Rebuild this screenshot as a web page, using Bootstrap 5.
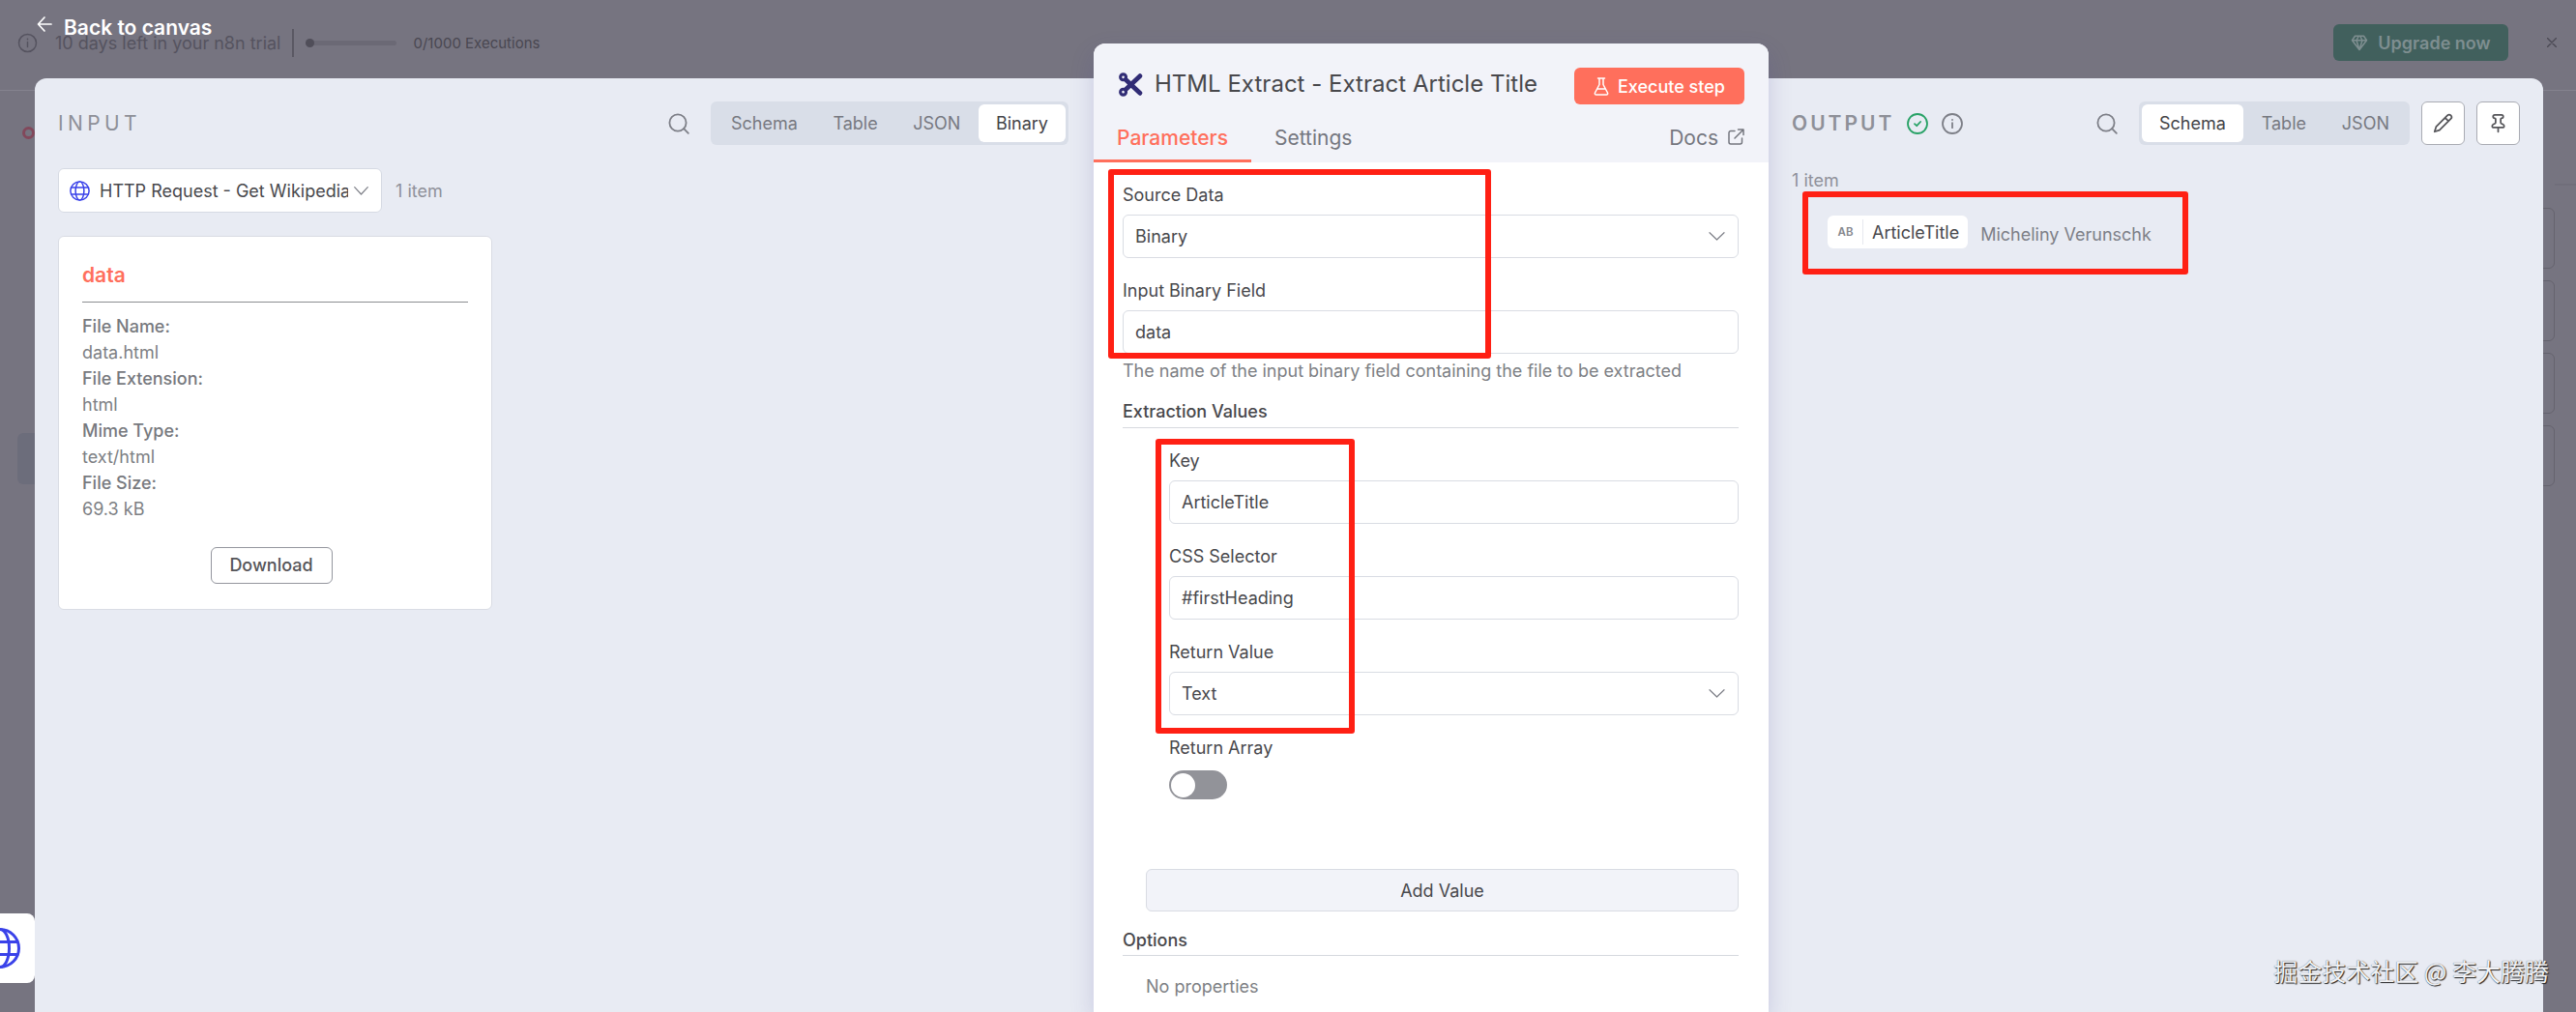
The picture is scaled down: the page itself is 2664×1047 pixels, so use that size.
<!DOCTYPE html>
<html lang="en">
<head>
<meta charset="utf-8">
<meta name="viewport" content="width=device-width, initial-scale=1">
<title>HTML Extract - Extract Article Title</title>
<link rel="stylesheet" href="https://cdn.jsdelivr.net/npm/bootstrap@5.3.0/dist/css/bootstrap.min.css">
<style>
  body { font-family: Inter, "Noto Sans", sans-serif; font-size: 18px; line-height: 27px; color: #48484c; background: #767480; height: 1047px; overflow: hidden; }
  svg { display: block; flex: none; fill: none; stroke: currentColor; stroke-linecap: round; stroke-linejoin: round; }

  /* dimmed application behind the dialog */
  .trial-bar { height: 94px; padding: 15px 20px 0 18px; color: #55535f; border-bottom: 1px solid #84828e; }
  .trial-row { height: 58px; }
  .trial-text { margin-left: 18px; }
  .trial-sep { width: 2px; height: 29px; background: #5a5863; margin: 0 12px; }
  .meter { width: 94px; height: 5px; border-radius: 3px; background: #6b6975; margin-right: 17px; }
  .meter i { display: block; width: 9px; height: 9px; border-radius: 50%; background: #504e59; transform: translateY(-2px); }
  .meter-text { font-size: 15px; color: #494751; }
  .btn-upgrade { width: 181px; height: 38px; background: #41605d; color: #7e8e90; font-size: 18px; font-weight: 600; border-radius: 6px; gap: 10px; margin-right: 40px; }
  .x-ink { color: #4c4a55; }
  .back-link { left: 38px; top: 14px; height: 28px; color: #fff; font-size: 21px; font-weight: 600; gap: 12px; }
  .back-link svg { margin-top: -6px; }
  .side-rule { right: 0; top: 190px; width: 22px; height: 2px; background: #706e7a; }
  .ghost-stack { right: 22px; top: 215px; width: 60px; gap: 12px; }
  .ghost-box { height: 63px; border: 1px solid #65636e; border-radius: 6px; }
  .ghost-node { left: 18px; top: 448px; width: 60px; height: 53px; border-radius: 6px; background: #6c6d7b; }
  .ghost-dot { left: 23px; top: 131px; width: 13px; height: 13px; border: 3px solid #82485b; border-radius: 50%; }
  .node-tab { left: 0; top: 945px; width: 36px; height: 72px; background: #fff; border-radius: 0 8px 8px 0; overflow: hidden; }
  .node-tab svg { margin-left: -21px; }

  /* dialog */
  .ndv { left: 36px; right: 34px; top: 81px; bottom: 0; background: #e8ebf3; border-radius: 12px 12px 0 0; overflow: hidden; }
  .pane-in { width: 1095px; padding: 24px 26px 0 24px; }
  .pane-mid { width: 698px; }
  .pane-out { padding: 24px 24px 0 24px; }
  .pane-title { font-size: 21px; letter-spacing: 4.4px; color: #8e9098; font-weight: 400; }
  .bold-title { font-weight: 600; letter-spacing: 3px; }
  .muted-ink { color: #7d7f87; }
  .pale-ink { color: #8f919a; }
  .globe-ink { color: #3a42e9; }
  .ok-ink { color: #28a266; margin-left: 13px; }
  .info-gap { margin-left: 14px; }
  .tabset { width: 370px; height: 45px; background: #d9dee8; border-radius: 6px; padding: 3px; margin-left: 22px; }
  .tabset-sm { width: 280px; }
  .tabset span { height: 39px; line-height: 39px; padding: 0 18px; border-radius: 6px; color: #777981; }
  .tabset .on { background: #fff; color: #444448; }
  .sq-btn { width: 45px; height: 45px; border: 1px solid #a9abb3; border-radius: 6px; background: #fff; color: #555559; margin-left: 12px; }
  .src-row { margin-top: 24px; }
  .src-select { width: 335px; height: 46px; border: 1px solid #d6dae3; border-radius: 6px; background: #fff; padding: 0 13px 0 11px; }
  .src-name { width: 257px; margin-left: 10px; overflow: hidden; white-space: nowrap; }
  .items-in { margin-left: 14px; }
  .bin-card { width: 449px; height: 387px; margin-top: 24px; border: 1px solid #d9dce4; border-radius: 6px; background: #fff; padding: 24px 24px 0 24px; color: #7d7f84; }
  .bin-name { font-size: 21px; line-height: 32px; font-weight: 600; color: #ff6f5c; }
  .bin-rule { height: 1px; background: #8b8d91; margin: 11px 0; }
  .bin-card dt { font-weight: 500; color: #77797e; }
  .bin-card dd { margin: 0; }
  .dl-row { margin: 26px 8px 0 0; }
  .btn-dl { width: 126px; height: 38px; border: 1px solid #94969e; border-radius: 6px; color: #555559; font-weight: 500; font-size: 18px; line-height: 24px; padding: 0; background: #fff; }
  .items-out { margin-top: 23px; }
  .field-row { margin: 23px 0 0 37px; }
  .pill { height: 34px; background: #fff; border-radius: 6px; color: #48484c; }
  .pill b { width: 36px; font-size: 11.5px; font-weight: 600; color: #85878d; text-align: center; padding-left: 1px; line-height: 32px; }
  .pill i { width: 1px; height: 26px; background: #e6e8ef; }
  .pill span { padding: 0 9px; line-height: 35px; }
  .field-val { margin: 4px 0 0 13px; }

  /* parameters panel */
  .params { left: 1131px; top: 45px; width: 698px; bottom: 0; background: #fff; border-radius: 12px 12px 0 0; box-shadow: 0 10px 24px rgba(70,65,150,.2); overflow: hidden; }
  .params-head { height: 123px; background: #f2f3f9; }
  .head-row { height: 82px; padding: 2px 25px 0 26px; }
  .scissors { color: #312c75; margin-right: 12px; }
  .node-title { font-size: 24px; line-height: 30px; letter-spacing: .02px; }
  .btn-exec { width: 176px; height: 38px; background: #ff6f5c; color: #fff; font-weight: 500; font-size: 18px; border-radius: 6px; gap: 9px; margin-top: 4px; }
  .tab-row { height: 41px; font-size: 21px; color: #75777f; padding-right: 25px; }
  .tab-row .cur { width: 163px; padding-left: 24px; margin-right: 24px; color: #ff6f5c; border-bottom: 3px solid #ff6f5c; height: 41px; font-weight: 500; }
  .tab-row span { line-height: 31px; }
  .tab-row svg { margin: 6px 0 0 10px; }
  .params-body { padding: 16px 31px 0 30px; }
  .p-label { height: 36px; line-height: 36px; margin-bottom: 2px; }
  .p-input { height: 45px; border: 1px solid #d9dce3; border-radius: 6px; padding: 0 13px 0 12px; margin-bottom: 16px; }
  .p-hint { height: 36px; line-height: 36px; margin-top: -16px; color: #7d7f84; }
  .p-sec { font-weight: 500; border-bottom: 1.5px solid #d6d9df; }
  .sec-a { height: 35px; line-height: 36px; margin: 6px 0 16px; }
  .sec-b { height: 32px; line-height: 32px; margin-top: 14px; }
  .nest { padding-left: 48px; }
  .switch-off { width: 60px; height: 30px; border-radius: 15px; background: #929399; padding: 2.5px 2px; margin-top: 5px; }
  .switch-off i { display: block; width: 25px; height: 25px; border-radius: 50%; background: #fff; }
  .btn-add { margin: 72px 0 0 24px; height: 44px; border: 1px solid #d9dce3; border-radius: 6px; background: #f2f3f9; }
  .no-props { margin: 18px 0 0 24px; color: #7d7f84; }

  /* annotation frames and watermark */
  .frame { border: 6px solid #ff2014; border-radius: 3px; }
  .fr-a { left: 1146px; top: 175px; width: 396px; height: 196px; }
  .fr-b { left: 1195px; top: 454px; width: 206px; height: 305px; }
  .fr-c { left: 1864px; top: 198px; width: 399px; height: 86px; }
  .wm { right: 28px; top: 985px; font: 25px/38px "Noto Sans CJK SC", sans-serif; color: #f1f2f5; text-shadow: 1px 1px 1px #222, 0 0 1px #555; white-space: nowrap; }
</style>
<script src="https://cdn.jsdelivr.net/npm/bootstrap@5.3.0/dist/js/bootstrap.bundle.min.js"></script>
</head>
<body class="position-relative">

<header class="trial-bar">
  <div class="trial-row d-flex align-items-center">
    <svg width="21" height="21" viewBox="0 0 21 21" stroke-width="1.5"><circle cx="10.5" cy="10.5" r="9"/><path d="M10.5 9.5v5M10.5 6.3v.4"/></svg>
    <span class="trial-text">10 days left in your n8n trial</span>
    <span class="trial-sep"></span>
    <span class="meter"><i></i></span>
    <span class="meter-text">0/1000 Executions</span>
    <button class="btn btn-upgrade d-flex align-items-center justify-content-center p-0 ms-auto" type="button">
      <svg width="18" height="18" viewBox="0 0 24 24" stroke-width="2"><path d="M6 3h12l4 6-10 13L2 9zM11 3 8 9l4 13 4-13-3-6M2 9h20"/></svg>
      Upgrade now
    </button>
    <svg class="x-ink" width="10" height="10" viewBox="0 0 10 10" stroke-width="1.4"><path d="m0 0 10 10M10 0 0 10"/></svg>
  </div>
</header>
<div class="side-rule position-absolute"></div>
<div class="ghost-stack position-absolute d-flex flex-column">
  <div class="ghost-box"></div><div class="ghost-box"></div><div class="ghost-box"></div><div class="ghost-box"></div>
</div>
<div class="ghost-node position-absolute"></div>
<div class="ghost-dot position-absolute"></div>

<a class="back-link position-absolute d-flex align-items-center text-decoration-none" href="#">
  <svg width="16" height="18" viewBox="0 0 16 18" stroke-width="1.7"><path d="M15 9H2M8 2 1.5 9 8 16"/></svg>
  Back to canvas
</a>

<main class="ndv position-absolute d-flex">
  <section class="pane-in">
    <div class="d-flex align-items-center">
      <h2 class="pane-title m-0">INPUT</h2>
      <svg class="ms-auto muted-ink" width="22" height="22" viewBox="0 0 22 22" stroke-width="1.8"><circle cx="10" cy="10" r="8.6"/><path d="m16.2 16.2 4.6 4.6"/></svg>
      <nav class="tabset d-flex justify-content-between"><span>Schema</span><span>Table</span><span>JSON</span><span class="on">Binary</span></nav>
    </div>
    <div class="src-row d-flex align-items-center">
      <div class="src-select d-flex align-items-center">
        <svg class="globe-ink" width="21" height="21" viewBox="0 0 24 24" stroke-width="1.7"><circle cx="12" cy="12" r="11"/><ellipse cx="12" cy="12" rx="5" ry="11"/><path d="M2 8h20M2 16h20"/></svg>
        <span class="src-name">HTTP Request - Get Wikipedia</span>
        <svg class="ms-auto muted-ink" width="15" height="9" viewBox="0 0 15 9" stroke-width="1.2"><path d="M.7.7 7.5 8l6.800-7.300"/></svg>
      </div>
      <span class="items-in pale-ink">1 item</span>
    </div>
    <article class="bin-card">
      <div class="bin-name">data</div>
      <div class="bin-rule"></div>
      <dl class="m-0">
        <dt>File Name:</dt><dd>data.html</dd>
        <dt>File Extension:</dt><dd>html</dd>
        <dt>Mime Type:</dt><dd>text/html</dd>
        <dt>File Size:</dt><dd>69.3 kB</dd>
      </dl>
      <div class="dl-row text-center"><button class="btn btn-dl" type="button">Download</button></div>
    </article>
  </section>
  <div class="pane-mid flex-shrink-0"></div>
  <section class="pane-out flex-grow-1">
    <div class="d-flex align-items-center">
      <h2 class="pane-title bold-title m-0">OUTPUT</h2>
      <svg class="ok-ink" width="22" height="22" viewBox="0 0 22 22" stroke-width="1.8"><circle cx="11" cy="11" r="10"/><path d="m8 11.200 2.200 2 3.900-4.200"/></svg>
      <svg class="muted-ink info-gap" width="22" height="22" viewBox="0 0 22 22" stroke-width="1.8"><circle cx="11" cy="11" r="10"/><path d="M11 10.200v5M11 6.800v.3"/></svg>
      <svg class="ms-auto muted-ink" width="22" height="22" viewBox="0 0 22 22" stroke-width="1.8"><circle cx="10" cy="10" r="8.6"/><path d="m16.2 16.2 4.6 4.6"/></svg>
      <nav class="tabset tabset-sm d-flex justify-content-between"><span class="on">Schema</span><span>Table</span><span>JSON</span></nav>
      <div class="sq-btn d-flex align-items-center justify-content-center">
        <svg width="21" height="21" viewBox="0 0 24 24" stroke-width="2"><path d="M21.200 6.800a2.800 2.800 0 0 0-4-4L3.800 16.200 2 22l5.800-1.800zM14.500 5.500l4 4"/></svg>
      </div>
      <div class="sq-btn d-flex align-items-center justify-content-center">
        <svg width="21" height="21" viewBox="0 0 24 24" stroke-width="2"><path d="M12 17v5M9 10.800c0 .8-.4 1.500-1.100 1.800l-1.800.9c-.7.3-1.100 1-1.100 1.700V16c0 .6.400 1 1 1h12c.6 0 1-.4 1-1v-.8c0-.7-.4-1.400-1.100-1.700l-1.800-.9c-.7-.3-1.100-1-1.100-1.800V7c0-.6.400-1 1-1a2 2 0 0 0 0-4H8a2 2 0 0 0 0 4c.6 0 1 .4 1 1z"/></svg>
      </div>
    </div>
    <div class="items-out pale-ink">1 item</div>
    <div class="field-row d-flex align-items-center">
      <div class="pill d-flex align-items-center"><b>AB</b><i></i><span>ArticleTitle</span></div>
      <span class="field-val muted-ink">Micheliny Verunschk</span>
    </div>
  </section>
</main>

<section class="params position-absolute">
  <div class="params-head">
    <div class="head-row d-flex align-items-center">
      <svg class="scissors" width="25" height="25" viewBox="0 0 24 24"><g stroke-width="3"><circle cx="4.400" cy="4.600" r="2.800"/><circle cx="4.400" cy="19.400" r="2.800"/></g><path d="M7 7.200 21 20.500M7 16.800 21 3.500" stroke-width="4.600"/></svg>
      <h1 class="node-title m-0 fw-normal">HTML Extract - Extract Article Title</h1>
      <button class="btn btn-exec d-flex align-items-center justify-content-center p-0 ms-auto" type="button">
        <svg width="16" height="19" viewBox="0 0 16 19" stroke-width="1.500"><path d="M4.500 1h7M6 1v6.500L1.500 16c-.5 1 .1 2 1.200 2h10.600c1.100 0 1.700-1 1.200-2L10 7.500V1M4 12h8"/></svg>
        Execute step
      </button>
    </div>
    <div class="tab-row d-flex">
      <span class="cur">Parameters</span>
      <span>Settings</span>
      <span class="ms-auto">Docs</span>
      <svg width="17" height="17" viewBox="0 0 17 17" stroke-width="1.500"><path d="M7 2.500H3A2 2 0 0 0 1 4.500V14a2 2 0 0 0 2 2h9.500a2 2 0 0 0 2-2v-4M10.500 1H16v5.500M16 1 7 10"/></svg>
    </div>
  </div>
  <div class="params-body">
    <div class="p-label">Source Data</div>
    <div class="p-input d-flex align-items-center justify-content-between">Binary
      <svg class="muted-ink" width="17" height="9" viewBox="0 0 17 9" stroke-width="1.200"><path d="m1 .7 7.500 7.300L16 .7"/></svg></div>
    <div class="p-label">Input Binary Field</div>
    <div class="p-input d-flex align-items-center">data</div>
    <div class="p-hint">The name of the input binary field containing the file to be extracted</div>
    <div class="p-sec sec-a">Extraction Values</div>
    <div class="nest">
      <div class="p-label">Key</div>
      <div class="p-input d-flex align-items-center">ArticleTitle</div>
      <div class="p-label">CSS Selector</div>
      <div class="p-input d-flex align-items-center">#firstHeading</div>
      <div class="p-label">Return Value</div>
      <div class="p-input d-flex align-items-center justify-content-between">Text
        <svg class="muted-ink" width="17" height="9" viewBox="0 0 17 9" stroke-width="1.200"><path d="m1 .7 7.500 7.300L16 .7"/></svg></div>
      <div class="p-label">Return Array</div>
      <div class="switch-off"><i></i></div>
    </div>
    <div class="btn-add d-flex align-items-center justify-content-center">Add Value</div>
    <div class="p-sec sec-b">Options</div>
    <div class="no-props">No properties</div>
  </div>
</section>

<div class="node-tab globe-ink position-absolute d-flex align-items-center">
  <svg width="42" height="42" viewBox="0 0 42 42" stroke-width="3"><circle cx="21" cy="21" r="19.500"/><ellipse cx="21" cy="21" rx="9.500" ry="19.500"/><path d="M3 14.500h36M3 27.500h36"/></svg>
</div>

<div class="frame fr-a position-absolute"></div>
<div class="frame fr-b position-absolute"></div>
<div class="frame fr-c position-absolute"></div>
<div class="wm position-absolute">掘金技术社区 @ 李大腾腾</div>
</body>
</html>
